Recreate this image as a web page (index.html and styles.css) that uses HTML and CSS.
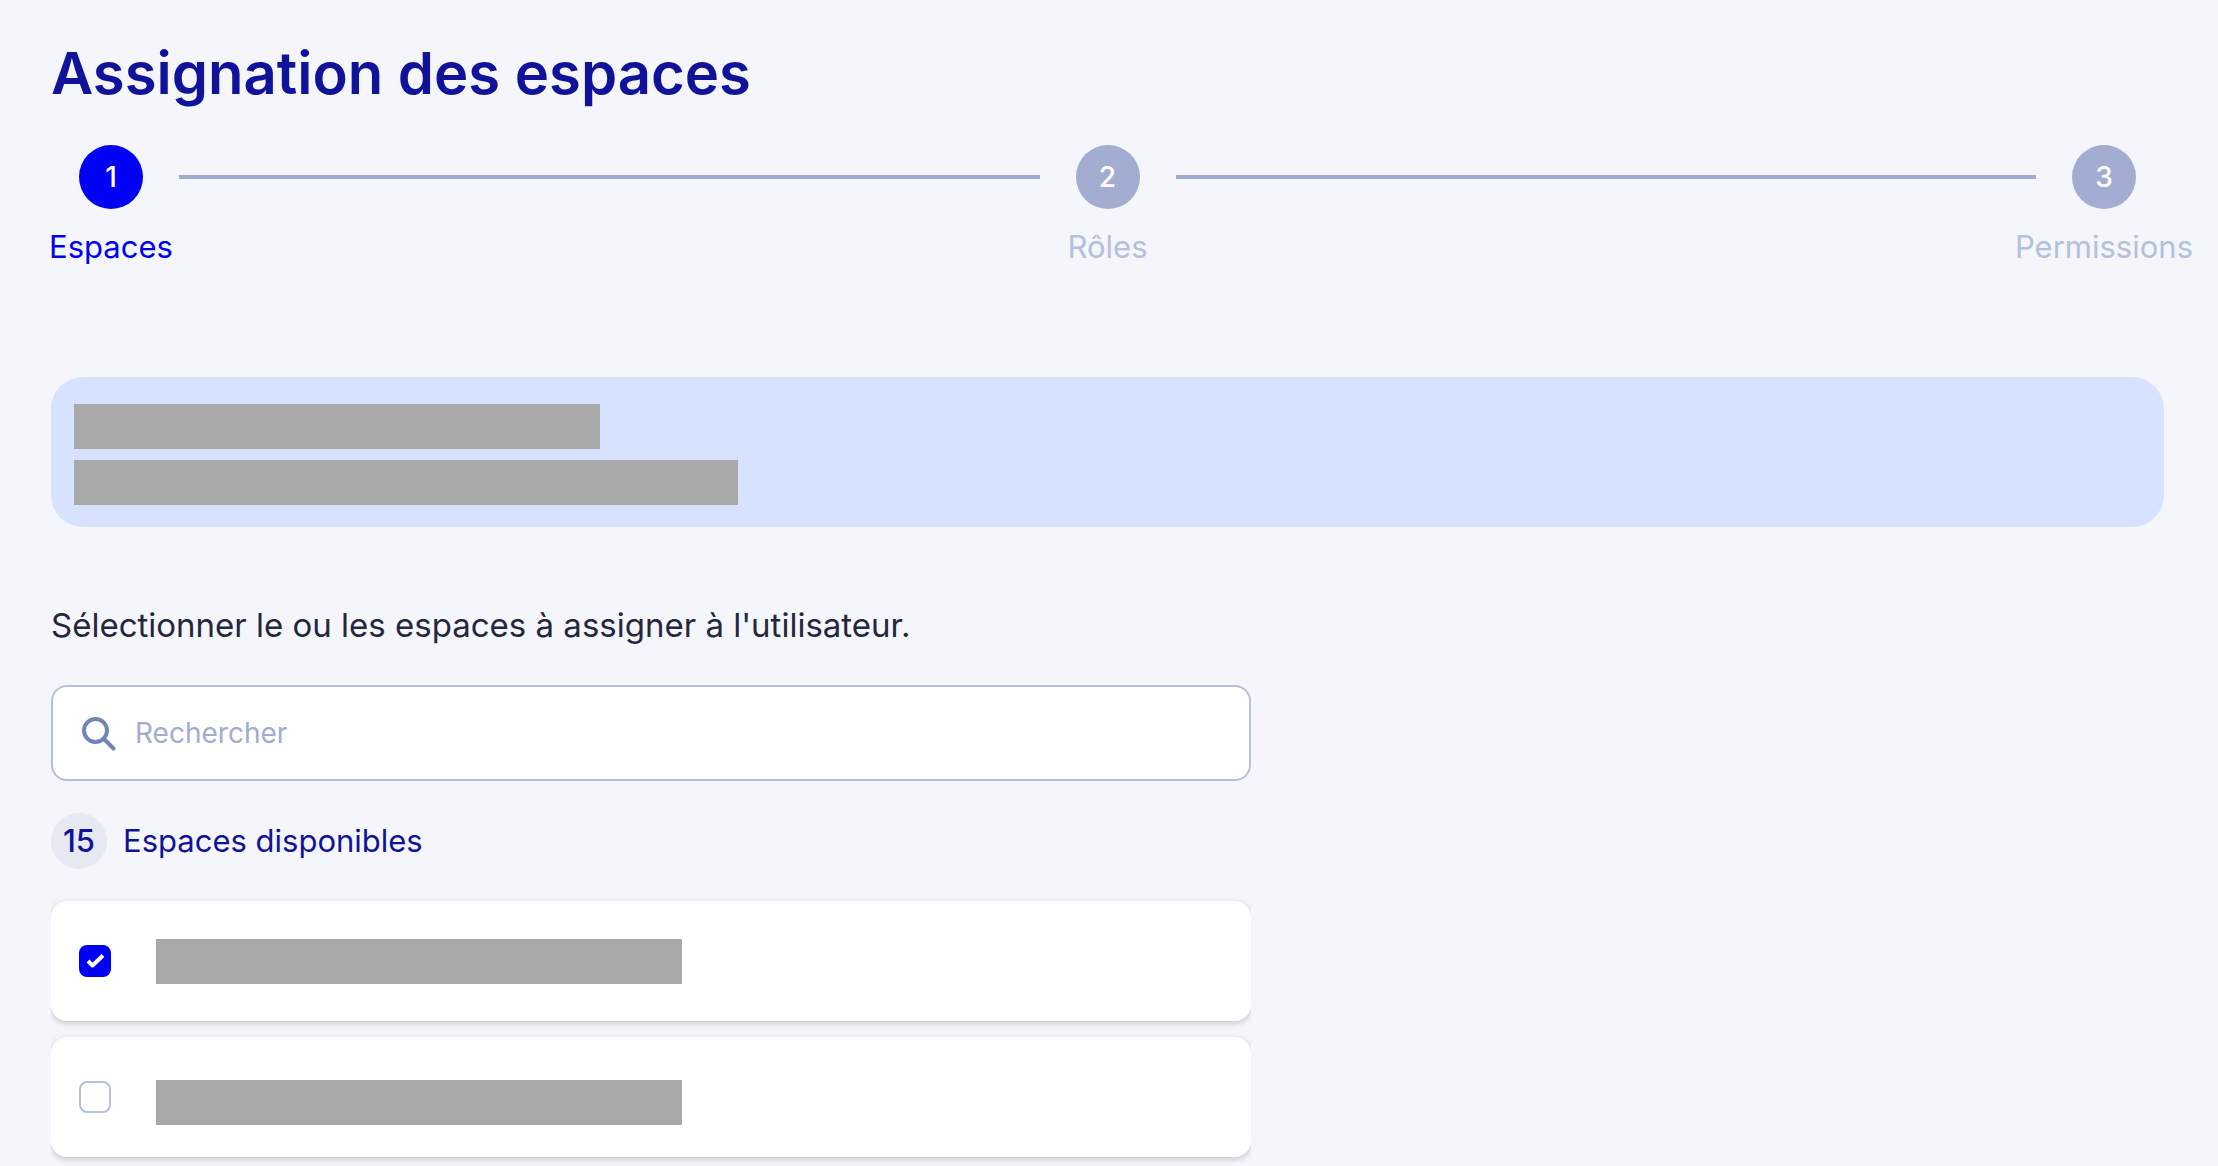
FILE: index.html
```html
<!doctype html>
<html lang="fr">
  <head>
    <meta charset="utf-8" />
    <title>Assignation des espaces</title>
    <link rel="stylesheet" href="styles.css">
  </head>
  <body>
    <main class="page">
      <h1 class="page-title">Assignation des espaces</h1>

      <ol class="stepper">
        <li class="step active" aria-current="step">
          <span class="step-number">1</span>
          <span class="step-label">Espaces</span>
        </li>
        <li class="step-line" aria-hidden="true"></li>
        <li class="step">
          <span class="step-number">2</span>
          <span class="step-label">Rôles</span>
        </li>
        <li class="step-line" aria-hidden="true"></li>
        <li class="step">
          <span class="step-number">3</span>
          <span class="step-label">Permissions</span>
        </li>
      </ol>

      <section class="user-banner" aria-label="Utilisateur">
        <div class="masked"></div>
        <div class="masked masked-long"></div>
      </section>

      <section class="spaces">
        <p class="instruction">Sélectionner le ou les espaces à assigner à l'utilisateur.</p>

        <div class="search">
          <svg class="search-icon" viewBox="0 0 36 36" aria-hidden="true">
            <circle cx="14.500" cy="15.500" r="11.500" />
            <path d="M23 24l9.500 9.500" />
          </svg>
          <input type="text" id="searchSpaces" placeholder="Rechercher" aria-label="Rechercher" />
        </div>

        <h2 class="list-title">
          <span class="count">15</span>
          Espaces disponibles
        </h2>

        <ul class="space-list">
          <li>
            <label class="space-card">
              <input type="checkbox" class="checkbox" aria-label="Espace 1" checked />
              <span class="masked"></span>
            </label>
          </li>
          <li>
            <label class="space-card">
              <input type="checkbox" class="checkbox" aria-label="Espace 2" />
              <span class="masked masked-end"></span>
            </label>
          </li>
        </ul>
      </section>
    </main>
  </body>
</html>
```
FILE: styles.css
```css
* {
  box-sizing: border-box;
}
body {
  margin: 0;
  background-color: #f4f6fb;
  color: #25273d;
  font-family: Inter, 'Liberation Sans', sans-serif;
  font-size: 31px;
  line-height: 40px;
}
.page {
  padding: 37px 54px 8px 51px;
}
.page-title {
  margin: 0 0 36px;
  color: #101399;
  font-size: 58px;
  font-weight: 600;
  line-height: 72px;
}

/* Stepper */
.stepper {
  display: flex;
  align-items: flex-start;
  margin: 0 0 110px;
  padding: 0;
  list-style: none;
}
.step {
  display: flex;
  flex: 0 0 120px;
  flex-direction: column;
  align-items: center;
  gap: 18px;
  min-width: 0;
}
.step-number {
  display: flex;
  align-items: center;
  justify-content: center;
  width: 64px;
  height: 64px;
  border-radius: 50%;
  background-color: #a2add1;
  color: white;
  font-size: 28px;
  font-weight: 500;
}
.step-label {
  color: #b5c0dc;
  white-space: nowrap;
}
.step.active .step-number {
  background-color: #0000f5;
}
.step.active .step-label {
  color: #0000f5;
}
.step-line {
  flex: 1;
  height: 4px;
  margin: 30px 8px 0;
  background-color: #a0add1;
}

/* Hidden personal data */
.masked {
  width: 526px;
  height: 45px;
  background-color: #a9a9a9;
}
.masked-long {
  width: 664px;
}
.masked-end {
  align-self: flex-end;
}

.user-banner {
  display: flex;
  flex-direction: column;
  gap: 11px;
  margin-bottom: 78px;
  padding: 27px 23px 22px;
  border-radius: 32px;
  background-color: #d7e3fe;
}

.spaces {
  max-width: 1200px;
}
.instruction {
  margin: 0 0 40px;
  font-size: 33px;
}

/* Search */
.search {
  display: flex;
  align-items: center;
  gap: 18px;
  height: 96px;
  margin-bottom: 32px;
  padding: 0 28px;
  border: 2px solid #b5c0dc;
  border-radius: 16px;
  background-color: white;
}
.search-icon {
  width: 36px;
  height: 36px;
  fill: none;
  stroke: #7484b8;
  stroke-width: 4;
  stroke-linecap: round;
}
.search input {
  flex: 1;
  padding: 0;
  border: none;
  outline: none;
  background: none;
  color: #25273d;
  font-family: inherit;
  font-size: 28px;
  line-height: 40px;
}
.search input::placeholder {
  color: #a2add1;
}
.search:focus-within {
  border-color: #0000f5;
}

/* Available spaces */
.list-title {
  display: flex;
  align-items: center;
  gap: 16px;
  margin: 0 0 32px;
  color: #101399;
  font-size: 31px;
  font-weight: 400;
}
.count {
  display: flex;
  align-items: center;
  justify-content: center;
  width: 56px;
  height: 56px;
  border-radius: 50%;
  background-color: #e6e9f2;
  font-weight: 500;
}
.space-list {
  display: flex;
  flex-direction: column;
  gap: 16px;
  margin: 0;
  padding: 0;
  overflow-x: clip;
  list-style: none;
}
.space-card {
  display: flex;
  align-items: center;
  gap: 45px;
  height: 120px;
  padding: 32px 28px;
  border-radius: 16px;
  background-color: white;
  box-shadow: 0 2px 6px rgba(0, 0, 0, 0.2);
  cursor: pointer;
}
.checkbox {
  appearance: none;
  width: 32px;
  height: 32px;
  margin: 0;
  border: 2px solid #b5c0dc;
  border-radius: 8px;
  background-color: white;
  cursor: pointer;
}
.checkbox:checked {
  border-color: #0000f5;
  background: #0000f5 url("data:image/svg+xml,%3Csvg xmlns='http://www.w3.org/2000/svg' viewBox='0 0 28 28'%3E%3Cpath d='M7 14l4.500 4.500L22 8.500' fill='none' stroke='white' stroke-width='4' stroke-linejoin='round'/%3E%3C/svg%3E") center / 28px no-repeat;
}
```
